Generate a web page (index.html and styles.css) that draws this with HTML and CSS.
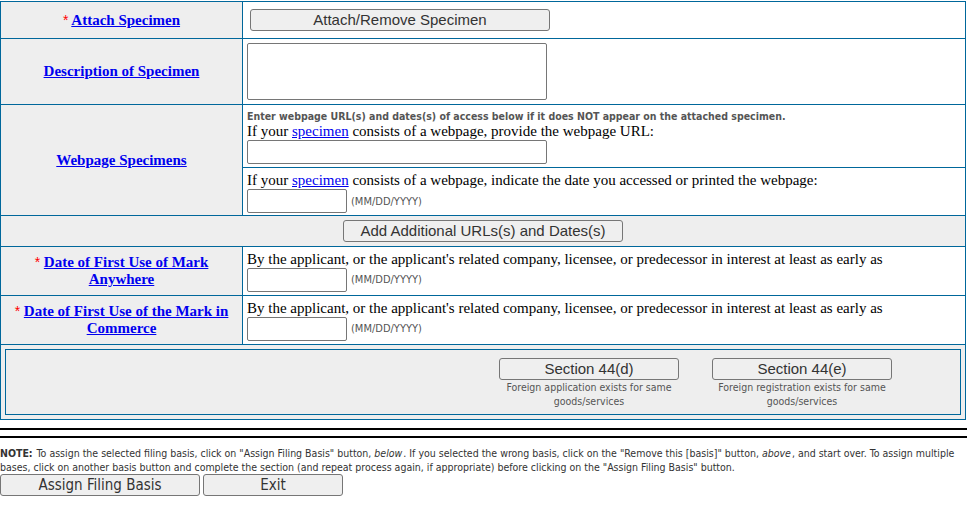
FILE: index.html
```html
<!DOCTYPE html>
<html>
<head>
<meta charset="utf-8">
<title>Specimen</title>
<link rel="stylesheet" href="styles.css">
</head>
<body>
<table class="form">
  <colgroup><col class="col-label"><col class="col-field"></colgroup>
  <tr class="r-attach">
    <th class="label"><span class="req">*</span> <a href="#">Attach Specimen</a></th>
    <td class="field"><button class="btn btn-attach">Attach/Remove Specimen</button></td>
  </tr>
  <tr class="r-desc">
    <th class="label"><a href="#">Description of Specimen</a></th>
    <td class="field"><textarea class="desc"></textarea></td>
  </tr>
  <tr class="r-web">
    <th class="label"><a href="#">Webpage Specimens</a></th>
    <td class="field field-split">
      <div class="sub sub-url">
        <div class="hint">Enter webpage URL(s) and dates(s) of access below if it does NOT appear on the attached specimen.</div>
        <div class="line">If your <a href="#" class="plain">specimen</a> consists of a webpage, provide the webpage URL:</div>
        <input class="url" type="text">
      </div>
      <div class="sub sub-date">
        <div class="line">If your <a href="#" class="plain">specimen</a> consists of a webpage, indicate the date you accessed or printed the webpage:</div>
        <div class="date-row"><input class="date" type="text"><span class="fmt">(MM/DD/YYYY)</span></div>
      </div>
    </td>
  </tr>
  <tr class="r-add">
    <td class="add-cell" colspan="2"><button class="btn btn-add">Add Additional URLs(s) and Dates(s)</button></td>
  </tr>
  <tr class="r-use">
    <th class="label"><span class="req">*</span> <a href="#">Date of First Use of Mark Anywhere</a></th>
    <td class="field field-use">
      <div class="line">By the applicant, or the applicant's related company, licensee, or predecessor in interest at least as early as</div>
      <div class="date-row"><input class="date" type="text"><span class="fmt">(MM/DD/YYYY)</span></div>
    </td>
  </tr>
  <tr class="r-use">
    <th class="label label-commerce"><span class="req">*</span> <a href="#">Date of First Use of the Mark in Commerce</a></th>
    <td class="field field-use">
      <div class="line">By the applicant, or the applicant's related company, licensee, or predecessor in interest at least as early as</div>
      <div class="date-row"><input class="date" type="text"><span class="fmt">(MM/DD/YYYY)</span></div>
    </td>
  </tr>
  <tr class="r-basis">
    <td class="basis-cell" colspan="2">
      <div class="basis-box">
        <div class="basis-opt">
          <button class="btn btn-basis">Section 44(d)</button>
          <div class="cap">Foreign application exists for same goods/services</div>
        </div>
        <div class="basis-opt">
          <button class="btn btn-basis">Section 44(e)</button>
          <div class="cap">Foreign registration exists for same goods/services</div>
        </div>
      </div>
    </td>
  </tr>
</table>
<div class="rule rule-1"></div>
<div class="rule rule-2"></div>
<p class="note"><b>NOTE:</b> To assign the selected filing basis, click on "Assign Filing Basis" button, <i>below</i>. If you selected the wrong basis, click on the "Remove this [basis]" button, <i>above</i>, and start over. To assign multiple bases, click on another basis button and complete the section (and repeat process again, if appropriate) before clicking on the "Assign Filing Basis" button.</p>
<div class="actions">
  <button class="btn btn-assign">Assign Filing Basis</button>
  <button class="btn btn-exit">Exit</button>
</div>
</body>
</html>
```

FILE: styles.css
```css
html, body {
  margin: 0;
  padding: 0;
  background: #fff;
}
body {
  padding-top: 1px;
  font-family: "Liberation Serif", "Times New Roman", serif;
  font-size: 15px;
  color: #000;
}
.form {
  width: 966px;
  border-collapse: collapse;
  table-layout: fixed;
}
.col-label { width: 242px; }
.form th, .form td {
  border: 1px solid #00679b;
  padding: 0;
}
.label {
  background: #eeeeee;
  text-align: center;
  vertical-align: middle;
  font-weight: bold;
  font-size: 15px;
  line-height: 17px;
  padding: 0 8px !important;
}
.label a {
  color: #0000ee;
  text-decoration: underline;
}
.req {
  color: #ff0000;
  font-family: "Liberation Sans", Arial, sans-serif;
  font-weight: normal;
  font-size: 14px;
}
.field {
  background: #fff;
  vertical-align: middle;
  padding: 0 0 0 4px !important;
}
.r-attach { height: 37px; }
.r-desc { height: 66px; }
.r-web { height: 111px; }
.r-add { height: 31px; }
.r-use { height: 49px; }
.r-basis { height: 75px; }

.btn {
  font-family: "Liberation Sans", Arial, sans-serif;
  font-size: 15px;
  color: #333;
  background: #efefef;
  border: 1px solid #767676;
  border-radius: 3px;
  padding: 0;
  height: 22px;
  line-height: 20px;
  display: inline-block;
}
.btn-attach {
  width: 300px;
  margin-left: 3px;
}
textarea.desc {
  display: block;
  width: 300px;
  height: 57px;
  box-sizing: border-box;
  border: 1px solid #767676;
  border-radius: 2px;
  margin: 0;
  resize: none;
}
input {
  box-sizing: border-box;
  border: 1px solid #767676;
  border-radius: 2px;
  height: 24px;
  margin: 0;
  padding: 1px 2px;
}
input.url {
  display: block;
  width: 300px;
}
input.date {
  width: 100px;
}
.field-split {
  padding: 0 !important;
  vertical-align: top !important;
}
.sub {
  padding-left: 4px;
}
.sub-url {
  height: 62px;
  padding-top: 5px;
  box-sizing: border-box;
}
.sub-date {
  border-top: 1px solid #00679b;
  padding-top: 4px;
}
.hint {
  font-family: "DejaVu Sans Condensed", "DejaVu Sans", sans-serif;
  font-weight: bold;
  font-size: 10.5px;
  line-height: 13px;
  color: #555;
}
.line {
  line-height: 17px;
}
a.plain {
  color: #0000ee;
  text-decoration: underline;
}
.date-row {
  display: flex;
  align-items: center;
  gap: 4px;
}
.fmt {
  font-family: "DejaVu Sans Condensed", "DejaVu Sans", sans-serif;
  font-size: 11px;
  color: #555;
}
.add-cell {
  background: #eeeeee;
  text-align: center;
  vertical-align: middle;
}
.btn-add {
  width: 280px;
  margin-left: 0;
}
.basis-cell {
  background: #eeeeee;
  padding: 4px !important;
}
.basis-box {
  border: 1px solid #00679b;
  height: 66px;
  box-sizing: border-box;
  display: flex;
  padding: 8px 0 0 493px;
  gap: 33px;
}
.basis-opt {
  width: 180px;
  text-align: center;
}
.btn-basis {
  width: 180px;
  display: block;
}
.cap {
  font-family: "DejaVu Sans Condensed", "DejaVu Sans", sans-serif;
  font-size: 10.5px;
  line-height: 14px;
  color: #555;
  padding: 0 6px;
}
.rule {
  height: 2px;
  background: #000;
}
.rule-1 { margin-top: 8px; }
.rule-2 { margin-top: 6px; }
.note {
  margin: 8px 0 0;
  font-family: "DejaVu Sans Condensed", "DejaVu Sans", sans-serif;
  font-size: 10.5px;
  line-height: 14px;
  color: #333;
}
.note b, .note i {
  padding-right: 1px;
}
.actions {
  display: flex;
  gap: 3px;
}
.btn-assign {
  width: 200px;
  font-family: "DejaVu Sans Condensed", "DejaVu Sans", sans-serif;
}
.btn-exit {
  width: 140px;
  font-family: "DejaVu Sans Condensed", "DejaVu Sans", sans-serif;
}
```
